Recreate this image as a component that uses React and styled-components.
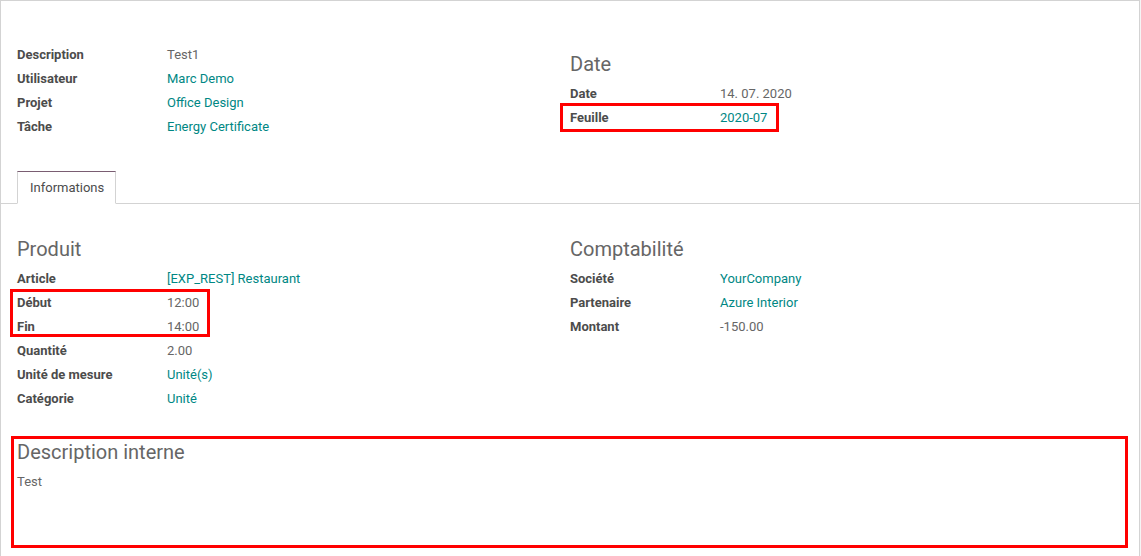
import styled, { createGlobalStyle } from "styled-components";

const GlobalStyle = createGlobalStyle`
  html, body {
    margin: 0;
    padding: 0;
    background: #f5f5f5;
    font-family: Roboto, "Noto Sans", sans-serif;
    font-size: 13px;
    color: #4c4c4c;
  }
`;

const topLeft = [
  { label: "Description", value: "Test1" },
  { label: "Utilisateur", value: "Marc Demo", link: true },
  { label: "Projet", value: "Office Design", link: true },
  { label: "Tâche", value: "Energy Certificate", link: true },
];

const dateFields = [
  { label: "Date", value: "14. 07. 2020" },
  { label: "Feuille", value: "2020-07", link: true },
];

const productFields = [
  { label: "Article", value: "[EXP_REST] Restaurant", link: true },
  { label: "Début", value: "12:00" },
  { label: "Fin", value: "14:00" },
  { label: "Quantité", value: "2.00" },
  { label: "Unité de mesure", value: "Unité(s)", link: true },
  { label: "Catégorie", value: "Unité", link: true },
];

const accountingFields = [
  { label: "Société", value: "YourCompany", link: true },
  { label: "Partenaire", value: "Azure Interior", link: true },
  { label: "Montant", value: "-150.00" },
];

const Fields = ({ items }) =>
  items.map((item) => (
    <Row key={item.label}>
      <Label>{item.label}</Label>
      <Value $link={item.link}>{item.value}</Value>
    </Row>
  ));

const App = () => {
  return (
    <>
      <GlobalStyle />
      <Sheet>
        <Columns $top="41px">
          <Group>
            <Fields items={topLeft} />
          </Group>
          <Group>
            <Separator $offset="10px">Date</Separator>
            <Fields items={dateFields} />
          </Group>
        </Columns>

        <Notebook>
          <Tab>Informations</Tab>
        </Notebook>

        <Columns $top="33px">
          <Group>
            <Separator>Produit</Separator>
            <Fields items={productFields} />
          </Group>
          <Group>
            <Separator>Comptabilité</Separator>
            <Fields items={accountingFields} />
          </Group>
        </Columns>

        <Internal>
          <Separator>Description interne</Separator>
          <Note>Test</Note>
        </Internal>

        {/* annotation boxes drawn over the form */}
        <Highlight $x={560} $y={103} $w={219} $h={29} />
        <Highlight $x={10} $y={289} $w={200} $h={48} />
        <Highlight $x={11} $y={436} $w={1117} $h={112} />
      </Sheet>
    </>
  );
};

const Sheet = styled.div`
  position: relative;
  box-sizing: border-box;
  width: 1140px;
  min-height: 620px;
  background: #ffffff;
  border: 1px solid #d3d3d3;
  border-bottom: none;
`;

const Columns = styled.div`
  display: grid;
  grid-template-columns: 1fr 1fr;
  padding: ${(p) => p.$top} 16px 0;
`;

const Group = styled.div`
  display: flex;
  flex-direction: column;
`;

const Separator = styled.div`
  margin-top: ${(p) => p.$offset || "0"};
  margin-bottom: 5px;
  font-size: 20px;
  line-height: 24px;
  color: #666666;
`;

const Row = styled.div`
  display: flex;
  height: 24px;
  align-items: center;
`;

const Label = styled.div`
  width: 150px;
  flex-shrink: 0;
  font-weight: 700;
  color: #4c4c4c;
`;

const Value = styled.div`
  color: ${(p) => (p.$link ? "#008784" : "#666666")};
`;

const Notebook = styled.div`
  display: flex;
  margin-top: 33px;
  padding: 0 16px;
  border-bottom: 1px solid #d3d3d3;
`;

const Tab = styled.div`
  box-sizing: border-box;
  height: 33px;
  margin-bottom: -1px;
  padding: 0 11px 0 12px;
  display: flex;
  align-items: center;
  background: #ffffff;
  border: 1px solid #d3d3d3;
  border-top-color: #7a5d72;
  border-bottom-color: #ffffff;
  color: #4c4c4c;
`;

const Internal = styled.div`
  padding: 30px 16px 0;
`;

const Note = styled.div`
  padding-top: 1px;
  line-height: 24px;
  color: #666666;
`;

const Highlight = styled.div`
  position: absolute;
  box-sizing: border-box;
  left: ${(p) => p.$x - 1}px;
  top: ${(p) => p.$y - 1}px;
  width: ${(p) => p.$w}px;
  height: ${(p) => p.$h}px;
  border: 3px solid #ff0000;
  pointer-events: none;
`;

export default App;
